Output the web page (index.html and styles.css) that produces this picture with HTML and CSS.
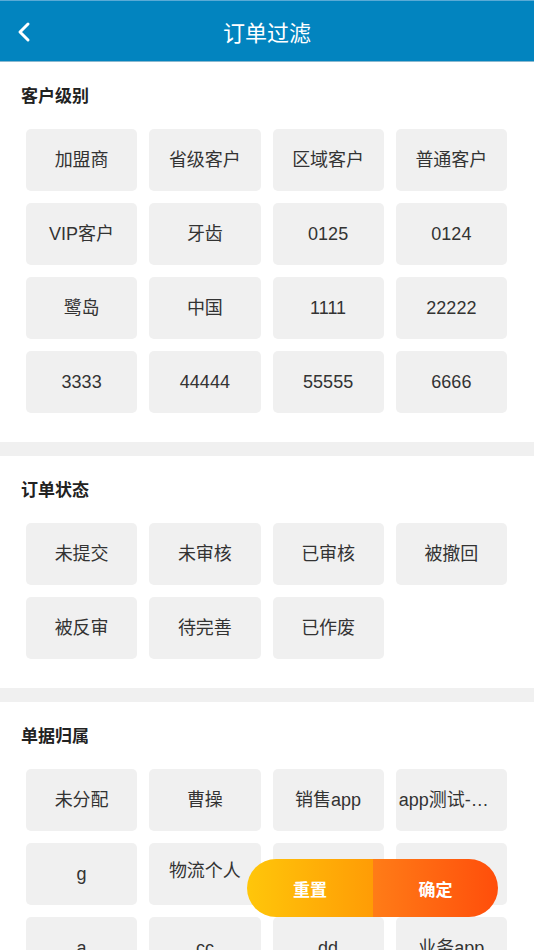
FILE: index.html
```html
<!DOCTYPE html>
<html lang="zh-cn">

<head>
    <meta charset="UTF-8">
    <meta name="viewport" content="width=device-width, initial-scale=1.0">
    <title>订单过滤</title>
    <link rel="stylesheet" href="styles.css">
</head>

<body>
    <div class="header">
        <a class="back" href="#">
            <svg width="14" height="22" viewBox="0 0 14 22">
                <polyline points="11,3 3,11 11,19" fill="none" stroke="#fff" stroke-width="3" stroke-linecap="round" stroke-linejoin="round" />
            </svg>
        </a>
        <h1>订单过滤</h1>
    </div>

    <div class="section">
        <h2>客户级别</h2>
        <ul class="options">
            <li>加盟商</li>
            <li>省级客户</li>
            <li>区域客户</li>
            <li>普通客户</li>
            <li>VIP客户</li>
            <li>牙齿</li>
            <li>0125</li>
            <li>0124</li>
            <li>鹭岛</li>
            <li>中国</li>
            <li>1111</li>
            <li>22222</li>
            <li>3333</li>
            <li>44444</li>
            <li>55555</li>
            <li>6666</li>
        </ul>
    </div>

    <div class="section">
        <h2>订单状态</h2>
        <ul class="options">
            <li>未提交</li>
            <li>未审核</li>
            <li>已审核</li>
            <li>被撤回</li>
            <li>被反审</li>
            <li>待完善</li>
            <li>已作废</li>
        </ul>
    </div>

    <div class="section">
        <h2>单据归属</h2>
        <ul class="options">
            <li>未分配</li>
            <li>曹操</li>
            <li>销售app</li>
            <li>app测试-账号</li>
            <li>g</li>
            <li class="up">物流个人</li>
            <li>test</li>
            <li>aaa</li>
            <li>a</li>
            <li>cc</li>
            <li>dd</li>
            <li>业务app</li>
        </ul>
    </div>

    <div class="actions">
        <a class="reset" href="#">重置</a>
        <a class="confirm" href="#">确定</a>
    </div>
</body>

</html>
```

FILE: styles.css
```css
* {
    list-style: none;
    margin: 0;
    padding: 0;
    box-sizing: border-box;
}

body {
    width: 534px;
    background-color: #fff;
    font-family: "Liberation Sans", "Noto Sans CJK SC", sans-serif;
    color: #333;
}

a {
    text-decoration: none;
}

.header {
    display: flex;
    align-items: center;
    justify-content: center;
    position: relative;
    height: 62px;
    background-color: #0284bf;
    border-top: 1px solid #5aaad6;
    border-bottom: 1px solid #8ab8cf;
}

.header h1 {
    font-size: 22px;
    font-weight: normal;
    color: #fff;
}

.header .back {
    position: absolute;
    left: 17px;
    top: 20px;
}

.section {
    padding: 21px 27px 29px 26px;
    border-bottom: 14px solid #f0f0f0;
}

.section h2 {
    font-size: 17px;
    line-height: 28px;
    font-weight: bold;
    color: #222;
    margin-left: -5px;
}

.options {
    display: grid;
    grid-template-columns: repeat(4, 1fr);
    gap: 12px;
    margin-top: 18px;
}

.options li {
    height: 62px;
    line-height: 62px;
    padding: 0 3px;
    background-color: #f0f0f0;
    border-radius: 5px;
    font-size: 18px;
    color: #333;
    text-align: center;
    white-space: nowrap;
    overflow: hidden;
    text-overflow: ellipsis;
}

.options li.up {
    line-height: 56px;
}

.actions {
    display: flex;
    position: fixed;
    right: 36px;
    bottom: 33px;
    width: 251px;
    height: 58px;
    border-radius: 29px;
    overflow: hidden;
}

.actions a {
    flex: 1;
    display: flex;
    align-items: center;
    justify-content: center;
    color: #fff;
    font-size: 17px;
    font-weight: bold;
}

.actions .reset {
    flex: 0 0 126px;
    background: linear-gradient(90deg, #ffc60a, #ff9c05);
}

.actions .confirm {
    background: linear-gradient(90deg, #ff7c17, #ff4e0b);
}
```
